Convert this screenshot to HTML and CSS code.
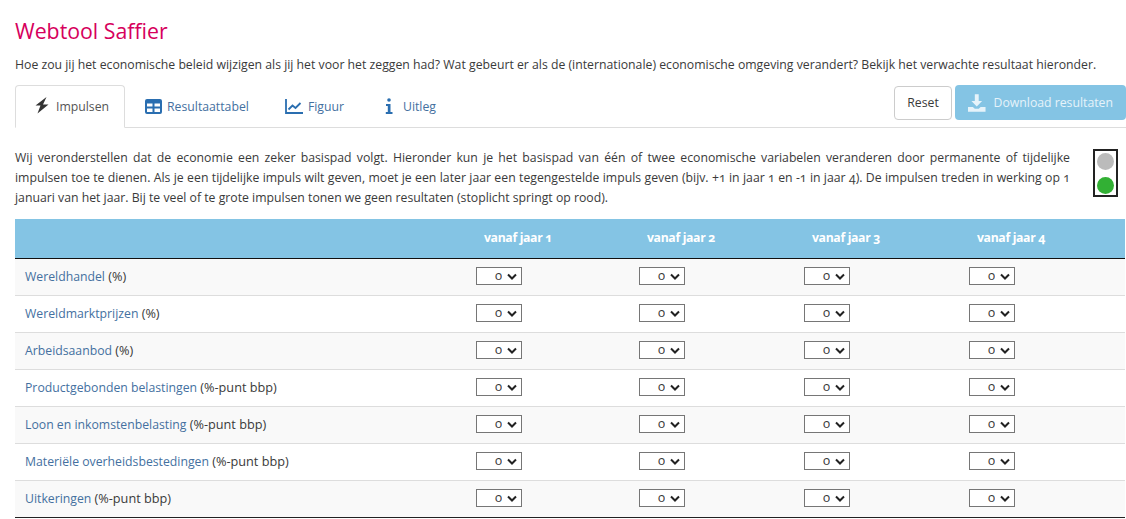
FILE: index.html
```html
<!DOCTYPE html>
<html lang="nl">
<head>
    <meta charset="UTF-8">
    <title>Webtool Saffier</title>
    <link rel="stylesheet" href="styles.css">
</head>
<body>
    <h1 class="page-title">Webtool Saffier</h1>
    <p class="intro">Hoe zou jij het economische beleid wijzigen als jij het voor het zeggen had? Wat gebeurt er als de (internationale) economische omgeving verandert? Bekijk het verwachte resultaat hieronder.</p>

    <div class="tab-bar">
        <a class="tab tab-active">
            <svg class="tab-icon bolt" viewBox="0 0 14 17"><path d="M11.500 0 .5 8.500h5L2.500 16.500 13.500 7.500h-5.500z"/></svg>
            Impulsen
        </a>
        <a class="tab">
            <svg class="tab-icon table-icon" viewBox="0 0 17 15"><path fill-rule="evenodd" d="M2 0h13a2 2 0 0 1 2 2v11a2 2 0 0 1-2 2H2a2 2 0 0 1-2-2V2a2 2 0 0 1 2-2zM2 4.500v3h5.500v-3zM9.500 4.500v3H15v-3zM2 9.500V13h5.500V9.500zM9.500 9.500V13H15V9.500z"/></svg>
            Resultaattabel
        </a>
        <a class="tab">
            <svg class="tab-icon chart" viewBox="0 0 18 15"><path class="line" d="M1 0v14h17M3.500 10.500l4-4 3 2.500 5-5"/></svg>
            Figuur
        </a>
        <a class="tab">
            <svg class="tab-icon info" viewBox="0 0 8 16"><circle cx="4" cy="2" r="1.800"/><path d="M1 6h4.500v8H7.500v2H.8v-2h2V8H1z"/></svg>
            Uitleg
        </a>
        <div class="tab-actions">
            <button class="btn-reset">Reset</button>
            <button class="btn-download">
                <svg class="download-icon" viewBox="0 0 18 18"><path d="M7 0h4v7h3.500L9 12.500 3.500 7H7zM0 13h5l2 2h4l2-2h5v5H0z"/></svg>
                Download resultaten
            </button>
        </div>
    </div>

    <div class="explain">
        <p class="explain-text">Wij veronderstellen dat de economie een zeker basispad volgt. Hieronder kun je het basispad van één of twee economische variabelen veranderen door permanente of tijdelijke impulsen toe te dienen. Als je een tijdelijke impuls wilt geven, moet je een later jaar een tegengestelde impuls geven (bijv. +1 in jaar 1 en -1 in jaar 4). De impulsen treden in werking op 1 januari van het jaar. Bij te veel of te grote impulsen tonen we geen resultaten (stoplicht springt op rood).</p>
        <div class="stoplight">
            <span class="lamp lamp-off"></span>
            <span class="lamp lamp-green"></span>
        </div>
    </div>

    <table class="impulse-table">
        <colgroup>
            <col class="col-name"><col class="col-y1"><col class="col-y2"><col class="col-y2"><col class="col-y4">
        </colgroup>
        <thead>
            <tr>
                <th></th>
                <th>vanaf jaar 1</th>
                <th>vanaf jaar 2</th>
                <th>vanaf jaar 3</th>
                <th>vanaf jaar 4</th>
            </tr>
        </thead>
        <tbody>
            <tr>
                <td><a>Wereldhandel</a> <span class="unit">(%)</span></td>
                <td><select><option>0</option></select></td>
                <td><select><option>0</option></select></td>
                <td><select><option>0</option></select></td>
                <td><select><option>0</option></select></td>
            </tr>
            <tr>
                <td><a>Wereldmarktprijzen</a> <span class="unit">(%)</span></td>
                <td><select><option>0</option></select></td>
                <td><select><option>0</option></select></td>
                <td><select><option>0</option></select></td>
                <td><select><option>0</option></select></td>
            </tr>
            <tr>
                <td><a>Arbeidsaanbod</a> <span class="unit">(%)</span></td>
                <td><select><option>0</option></select></td>
                <td><select><option>0</option></select></td>
                <td><select><option>0</option></select></td>
                <td><select><option>0</option></select></td>
            </tr>
            <tr>
                <td><a>Productgebonden belastingen</a> <span class="unit">(%-punt bbp)</span></td>
                <td><select><option>0</option></select></td>
                <td><select><option>0</option></select></td>
                <td><select><option>0</option></select></td>
                <td><select><option>0</option></select></td>
            </tr>
            <tr>
                <td><a>Loon en inkomstenbelasting</a> <span class="unit">(%-punt bbp)</span></td>
                <td><select><option>0</option></select></td>
                <td><select><option>0</option></select></td>
                <td><select><option>0</option></select></td>
                <td><select><option>0</option></select></td>
            </tr>
            <tr>
                <td><a>Materiële overheidsbestedingen</a> <span class="unit">(%-punt bbp)</span></td>
                <td><select><option>0</option></select></td>
                <td><select><option>0</option></select></td>
                <td><select><option>0</option></select></td>
                <td><select><option>0</option></select></td>
            </tr>
            <tr>
                <td><a>Uitkeringen</a> <span class="unit">(%-punt bbp)</span></td>
                <td><select><option>0</option></select></td>
                <td><select><option>0</option></select></td>
                <td><select><option>0</option></select></td>
                <td><select><option>0</option></select></td>
            </tr>
        </tbody>
    </table>
</body>
</html>
```
FILE: styles.css
```css
html, body {
    height: 519px;
    overflow: hidden;
}
body {
    font-family: "Open Sans", Arial, sans-serif;
    font-size: 12.25px;
    font-variant-numeric: oldstyle-nums;
    color: #3a3a3a;
    margin: 0;
    padding: 16px 0 0 15px;
    background-color: #fff;
}
.page-title {
    font-size: 21.3px;
    font-weight: 400;
    line-height: 30px;
    color: #d6005c;
    margin: 0;
}
.intro {
    line-height: 20px;
    margin: 9px 0 0;
    white-space: nowrap;
}
.tab-bar {
    display: flex;
    height: 42px;
    margin-top: 10px;
    border-bottom: 1px solid #ddd;
}
.tab {
    display: flex;
    align-items: center;
    gap: 5px;
    height: 42px;
    padding: 0 16px 0 20px;
    color: #44709f;
    box-sizing: border-box;
}
.tab-active {
    color: #555;
    background: #fff;
    border: 1px solid #ddd;
    border-bottom-color: #fff;
    border-radius: 4px 4px 0 0;
    height: 43px;
    width: 110px;
    padding: 0 0 0 19px;
}
.tab-icon {
    fill: #2a6eb0;
}
.bolt {
    width: 14px;
    height: 17px;
    margin: -2px 2px 0 0;
    fill: #333;
}
.table-icon {
    width: 17px;
    height: 15px;
}
.chart {
    width: 18px;
    height: 15px;
}
.chart .line {
    fill: none;
    stroke: #2a6eb0;
    stroke-width: 1.800;
}
.info {
    width: 8px;
    height: 16px;
    margin: 0 5px;
}
.tab-actions {
    display: flex;
    gap: 3px;
    margin-left: auto;
    height: 35px;
}
.tab-actions button {
    font-family: inherit;
    font-size: 12.25px;
    border-radius: 4px;
    height: 35px;
}
.btn-reset {
    width: 58px;
    margin-top: 1px;
    padding: 0 0 2px;
    height: 34px !important;
    background: #fff;
    color: #3a3a3a;
    border: 1px solid #ccc;
}
.btn-download {
    display: flex;
    align-items: center;
    gap: 8px;
    width: 171px;
    padding: 0 13px;
    white-space: nowrap;
    background: #84c4e4;
    color: #e6f3fa;
    border: 0;
}
.download-icon {
    width: 18px;
    height: 18px;
    fill: #e6f3fa;
}
.explain {
    display: flex;
    justify-content: space-between;
    width: 1111px;
    margin-top: 20px;
}
.explain-text {
    width: 1055px;
    margin: 0;
    line-height: 20px;
    text-align: justify;
}
.stoplight {
    display: flex;
    flex-direction: column;
    gap: 7px;
    align-items: center;
    justify-content: center;
    width: 25px;
    height: 48px;
    margin: 1px 8px 0 0;
    box-sizing: border-box;
    border: 2px solid #222;
    background: #fff;
}
.lamp {
    width: 17px;
    height: 17px;
    border-radius: 50%;
}
.lamp-off {
    background: #bbb;
}
.lamp-green {
    background: #32b034;
}
.impulse-table {
    width: 1110px;
    margin-top: 11px;
    border-collapse: collapse;
    table-layout: fixed;
}
.col-name { width: 451px; }
.col-y1 { width: 163px; }
.col-y2 { width: 165px; }
.col-y4 { width: 166px; }
.impulse-table th {
    height: 37px;
    padding: 0 0 2px 18px;
    background: #84c4e4;
    color: #fff;
    font-weight: 700;
    letter-spacing: -0.35px;
    text-align: left;
    border-bottom: 1px solid #111;
}
.impulse-table td {
    height: 34px;
    padding: 0 0 2px 10px;
    border-bottom: 1px solid #ddd;
}
.impulse-table tbody tr:nth-child(odd) {
    background: #f9f9f9;
}
.impulse-table tbody tr:last-child td {
    border-bottom: 1px solid #222;
}
.impulse-table a {
    color: #44709f;
}
.unit {
    font-size: 12.7px;
}
.impulse-table select {
    display: block;
    appearance: none;
    box-sizing: border-box;
    width: 46px;
    height: 18px;
    padding: 0 19px 3px 0;
    font-family: inherit;
    font-size: 13px;
    line-height: 14px;
    font-variant-numeric: oldstyle-nums;
    text-align-last: right;
    background: #fff url("data:image/svg+xml,%3Csvg xmlns='http://www.w3.org/2000/svg' viewBox='0 0 10 7'%3E%3Cpath d='M1 1.500l4 4 4-4' fill='none' stroke='%23222' stroke-width='2'/%3E%3C/svg%3E") no-repeat right 4px center / 10px 7px;
    color: #3a3a3a;
    border: 1px solid #767676;
    border-radius: 0;
}
```
